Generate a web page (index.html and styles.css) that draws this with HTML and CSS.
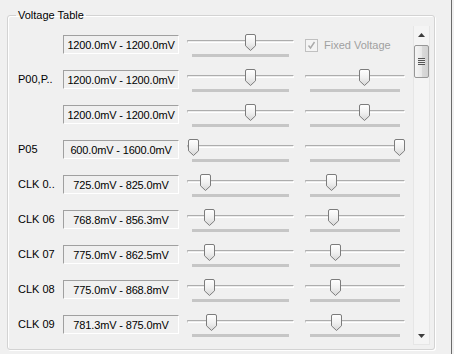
FILE: index.html
```html
<!DOCTYPE html>
<html>
<head>
<meta charset="utf-8">
<link rel="stylesheet" href="styles.css">
</head>
<body>
<svg class="defs" width="0" height="0">
  <defs>
    <linearGradient id="tg" x1="0" y1="0" x2="0" y2="1">
      <stop offset="0" stop-color="#ffffff"/>
      <stop offset="0.5" stop-color="#f1f1f1"/>
      <stop offset="1" stop-color="#d6d6d6"/>
    </linearGradient>
    <symbol id="thumb" viewBox="0 0 11 17">
      <path d="M2 .5h7a1.5 1.5 0 0 1 1.5 1.5v9.8L5.5 16.5.5 11.8V2A1.5 1.5 0 0 1 2 .5z" fill="url(#tg)" stroke="#7c7c7c"/>
    </symbol>
  </defs>
</svg>
<div class="window">
  <div class="client">
    <fieldset class="group">
      <legend class="group-title">Voltage Table</legend>
      <div class="scroller">
        <div class="rows">
          <div class="row">
            <span class="label"></span>
            <span class="range">1200.0mV - 1200.0mV</span>
            <div class="slider wide"><div class="track"></div><div class="ticks"></div><svg class="thumb" style="left:58px" width="11" height="17"><use href="#thumb"/></svg></div>
            <label class="fixed">
              <span class="check"><svg width="11" height="11" viewBox="0 0 11 11"><path d="M2.5 5.5l2 2.5 4-6" fill="none" stroke="#a9a9a9" stroke-width="1.4"/></svg></span>
              <span class="fixed-text">Fixed Voltage</span>
            </label>
          </div>
          <div class="row">
            <span class="label">P00,P..</span>
            <span class="range">1200.0mV - 1200.0mV</span>
            <div class="slider wide"><div class="track"></div><div class="ticks"></div><svg class="thumb" style="left:58px" width="11" height="17"><use href="#thumb"/></svg></div>
            <div class="slider narrow"><div class="track"></div><div class="ticks"></div><svg class="thumb" style="left:54px" width="11" height="17"><use href="#thumb"/></svg></div>
          </div>
          <div class="row">
            <span class="label"></span>
            <span class="range">1200.0mV - 1200.0mV</span>
            <div class="slider wide"><div class="track"></div><div class="ticks"></div><svg class="thumb" style="left:58px" width="11" height="17"><use href="#thumb"/></svg></div>
            <div class="slider narrow"><div class="track"></div><div class="ticks"></div><svg class="thumb" style="left:54px" width="11" height="17"><use href="#thumb"/></svg></div>
          </div>
          <div class="row">
            <span class="label">P05</span>
            <span class="range">600.0mV - 1600.0mV</span>
            <div class="slider wide"><div class="track"></div><div class="ticks"></div><svg class="thumb" style="left:1px" width="11" height="17"><use href="#thumb"/></svg></div>
            <div class="slider narrow"><div class="track"></div><div class="ticks"></div><svg class="thumb" style="left:89px" width="11" height="17"><use href="#thumb"/></svg></div>
          </div>
          <div class="row">
            <span class="label">CLK 0..</span>
            <span class="range">725.0mV - 825.0mV</span>
            <div class="slider wide"><div class="track"></div><div class="ticks"></div><svg class="thumb" style="left:13px" width="11" height="17"><use href="#thumb"/></svg></div>
            <div class="slider narrow"><div class="track"></div><div class="ticks"></div><svg class="thumb" style="left:21px" width="11" height="17"><use href="#thumb"/></svg></div>
          </div>
          <div class="row">
            <span class="label">CLK 06</span>
            <span class="range">768.8mV - 856.3mV</span>
            <div class="slider wide"><div class="track"></div><div class="ticks"></div><svg class="thumb" style="left:17px" width="11" height="17"><use href="#thumb"/></svg></div>
            <div class="slider narrow"><div class="track"></div><div class="ticks"></div><svg class="thumb" style="left:23px" width="11" height="17"><use href="#thumb"/></svg></div>
          </div>
          <div class="row">
            <span class="label">CLK 07</span>
            <span class="range">775.0mV - 862.5mV</span>
            <div class="slider wide"><div class="track"></div><div class="ticks"></div><svg class="thumb" style="left:17px" width="11" height="17"><use href="#thumb"/></svg></div>
            <div class="slider narrow"><div class="track"></div><div class="ticks"></div><svg class="thumb" style="left:25px" width="11" height="17"><use href="#thumb"/></svg></div>
          </div>
          <div class="row">
            <span class="label">CLK 08</span>
            <span class="range">775.0mV - 868.8mV</span>
            <div class="slider wide"><div class="track"></div><div class="ticks"></div><svg class="thumb" style="left:17px" width="11" height="17"><use href="#thumb"/></svg></div>
            <div class="slider narrow"><div class="track"></div><div class="ticks"></div><svg class="thumb" style="left:25px" width="11" height="17"><use href="#thumb"/></svg></div>
          </div>
          <div class="row">
            <span class="label">CLK 09</span>
            <span class="range">781.3mV - 875.0mV</span>
            <div class="slider wide"><div class="track"></div><div class="ticks"></div><svg class="thumb" style="left:19px" width="11" height="17"><use href="#thumb"/></svg></div>
            <div class="slider narrow"><div class="track"></div><div class="ticks"></div><svg class="thumb" style="left:26px" width="11" height="17"><use href="#thumb"/></svg></div>
          </div>
        </div>
        <div class="vscroll">
          <div class="sbtn"><svg width="7" height="4" viewBox="0 0 7 4"><path d="M3.5 0L7 4H0z" fill="#3c3c3c"/></svg></div>
          <div class="sthumb"><span class="grip"></span></div>
          <div class="strack"></div>
          <div class="sbtn"><svg width="7" height="4" viewBox="0 0 7 4"><path d="M0 0h7L3.5 4z" fill="#3c3c3c"/></svg></div>
        </div>
      </div>
    </fieldset>
  </div>
  <div class="edge"></div>
  <div class="outer"></div>
</div>
</body>
</html>
```

FILE: styles.css
```css
* { box-sizing: border-box; }
html, body {
  margin: 0;
  padding: 0;
  background: #f0f0f0;
  width: 454px;
  height: 354px;
  overflow: hidden;
  font-family: "Liberation Sans", Arial, sans-serif;
  font-size: 11px;
  color: #000;
}
.defs { position: absolute; }
.window {
  display: flex;
  width: 454px;
  height: 354px;
}
.client {
  width: 451px;
  height: 354px;
  padding: 9px 0 0 7px;
}
.edge {
  width: 1px;
  background: #6b6b6b;
}
.outer {
  width: 2px;
  background: #f0f0f0;
}
.group {
  margin: 0;
  width: 428px;
  height: 341px;
  border: 1px solid #d3d3d3;
  border-radius: 3px;
  box-shadow: inset 1px 1px 0 #fff, 1px 1px 0 #fff;
  padding: 4px 3px 3px 2px;
}
.group-title {
  padding: 0 2px;
  margin-left: 6px;
  line-height: 13px;
  font-size: 11px;
}
.scroller {
  display: flex;
  height: 319px;
  width: 420px;
}
.rows {
  flex: 1;
  overflow: hidden;
  padding-top: 9px;
}
.row {
  display: flex;
  align-items: flex-start;
  height: 35px;
  padding-left: 8px;
}
.label {
  width: 45px;
  line-height: 19px;
  white-space: nowrap;
}
.range {
  width: 116px;
  height: 19px;
  line-height: 18px;
  text-align: center;
  letter-spacing: -0.15px;
  border-top: 1px solid #a0a0a0;
  border-left: 1px solid #a0a0a0;
  border-right: 1px solid #fff;
  border-bottom: 1px solid #fff;
  white-space: nowrap;
}
.slider {
  position: relative;
  height: 23px;
  margin-top: -1px;
}
.wide {
  width: 107px;
  margin-left: 8px;
}
.narrow {
  width: 100px;
  margin-left: 11px;
}
.track {
  margin-top: 6px;
  height: 3px;
  border-top: 1px solid #adadad;
  border-left: 1px solid #c4c4c4;
  border-bottom: 1px solid #fff;
  border-right: 1px solid #fff;
  background: #ececec;
}
.ticks {
  margin: 11px 5px 0;
  height: 3px;
  background: #c6c6c6;
}
.thumb {
  position: absolute;
  top: 0;
  display: block;
}
.fixed {
  display: flex;
  align-items: center;
  margin-left: 11px;
  margin-top: 4px;
  height: 13px;
}
.check {
  width: 13px;
  height: 13px;
  border: 1px solid #c0c0c0;
  background: #f4f4f4;
  display: flex;
  align-items: center;
  justify-content: center;
}
.check svg { display: block; }
.fixed-text {
  margin-left: 6px;
  color: #a0a0a0;
  line-height: 13px;
}
.vscroll {
  width: 17px;
  display: flex;
  flex-direction: column;
  background: #f4f4f4;
  border-left: 1px solid #e6e6e6;
  border-right: 1px solid #e6e6e6;
  border-bottom: 1px solid #e6e6e6;
}
.sbtn {
  height: 17px;
  display: flex;
  align-items: center;
  justify-content: center;
}
.sbtn svg { display: block; }
.sthumb {
  margin: 2px 0 0 0;
  height: 33px;
  border: 1px solid #979797;
  border-radius: 2px;
  background: linear-gradient(to right, #f6f6f6, #e9e9e9 50%, #dadada 51%, #d2d2d2);
  display: flex;
  align-items: center;
  justify-content: center;
}
.grip {
  width: 7px;
  height: 7px;
  background: repeating-linear-gradient(to bottom, #555 0, #555 1px, #e8e8e8 1px, #e8e8e8 2px);
}
.strack { flex: 1; }
```
